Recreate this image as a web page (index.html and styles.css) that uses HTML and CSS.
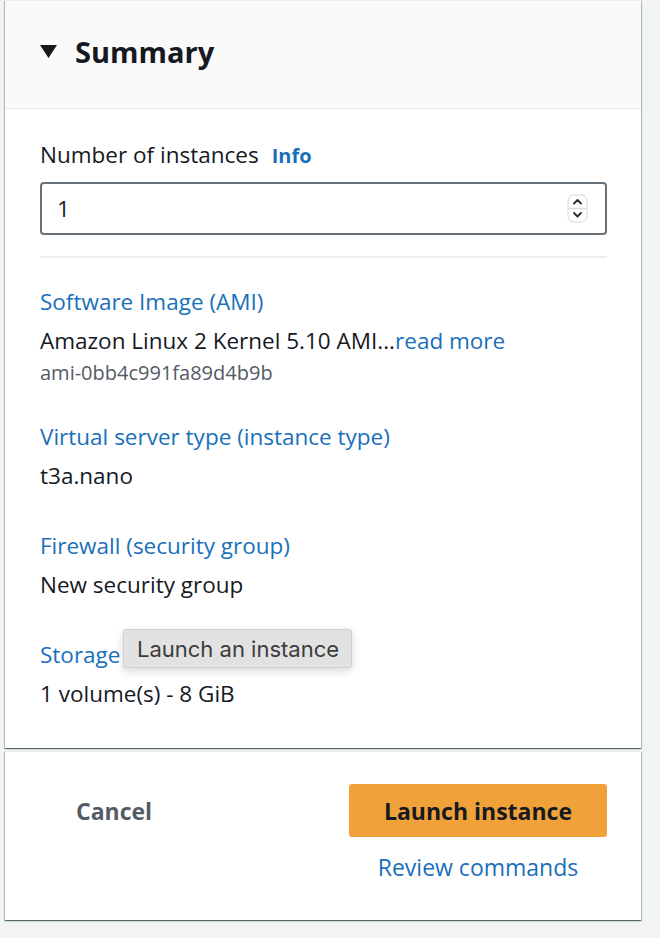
FILE: index.html
```html
<!DOCTYPE html>
<html lang="en">
<head>
<meta charset="utf-8">
<title>Summary</title>
<link rel="stylesheet" href="styles.css">
</head>
<body>
<div class="page">
  <section class="card summary">
    <header class="card-header">
      <svg class="caret" width="17" height="13" viewBox="0 0 17 13" aria-hidden="true"><polygon points="0,0 17,0 8.5,13" fill="#16191f"/></svg>
      <h2 class="title">Summary</h2>
    </header>
    <div class="card-body">
      <div class="field">
        <div class="field-label">Number of instances <a class="info" href="#">Info</a></div>
        <div class="number-input">
          <span class="number-value">1</span>
          <svg class="spinner" width="21" height="29" viewBox="0 0 21 29" aria-hidden="true">
            <rect x="1" y="1" width="19" height="27" rx="6" fill="#fff" stroke="#d6d6d6"/>
            <line x1="1.5" y1="14.5" x2="19.5" y2="14.5" stroke="#dcdcdc" stroke-width="1.5"/>
            <polyline points="7,9.5 10.5,6 14,9.5" fill="none" stroke="#2b2b2b" stroke-width="1.8" stroke-linecap="round" stroke-linejoin="round"/>
            <polyline points="7,19 10.5,22.5 14,19" fill="none" stroke="#2b2b2b" stroke-width="1.8" stroke-linecap="round" stroke-linejoin="round"/>
          </svg>
        </div>
      </div>
      <hr class="divider">
      <div class="details">
        <div class="group">
          <a class="key" href="#">Software Image (AMI)</a>
          <div class="value">Amazon Linux 2 Kernel 5.10 AMI...<a class="more" href="#">read more</a></div>
          <div class="sub">ami-0bb4c991fa89d4b9b</div>
        </div>
        <div class="group">
          <a class="key" href="#">Virtual server type (instance type)</a>
          <div class="value">t3a.nano</div>
        </div>
        <div class="group">
          <a class="key" href="#">Firewall (security group)</a>
          <div class="value">New security group</div>
        </div>
        <div class="group storage">
          <a class="key" href="#">Storage</a>
          <div class="value">1 volume(s) - 8 GiB</div>
          <div class="tooltip">Launch an instance</div>
        </div>
      </div>
    </div>
  </section>
  <section class="card actions">
    <div class="cancel-col">
      <button class="cancel" type="button">Cancel</button>
    </div>
    <div class="primary-col">
      <button class="launch" type="button">Launch instance</button>
      <a class="review" href="#">Review commands</a>
    </div>
  </section>
</div>
</body>
</html>
```
FILE: styles.css
```css
* { box-sizing: border-box; }
html, body { margin: 0; padding: 0; }
body {
  background: #f2f3f3;
  font-family: "Open Sans", "Noto Sans", sans-serif;
  color: #16191f;
  width: 660px;
  height: 938px;
  overflow: hidden;
}
a { text-decoration: none; color: #1a6fbb; }

.page {
  padding: 0 19px 0 5px;
}

.card {
  background: #fff;
  border-top: 1px solid #eaeded;
  box-shadow: 0 1px 1px 0 rgba(0, 28, 36, 0.45), 1px 1px 1px 0 rgba(0, 28, 36, 0.2), -1px 1px 1px 0 rgba(0, 28, 36, 0.2);
}

.summary { height: 748px; }

.card-header {
  height: 108px;
  background: #fafafa;
  border-bottom: 1px solid #eaeded;
  display: flex;
  align-items: center;
  padding: 0 0 6px 35px;
  gap: 18px;
}
.title {
  margin: 0;
  font-size: 29px;
  font-weight: 700;
  line-height: 36px;
  color: #16191f;
}

.card-body {
  position: relative;
  padding: 31px 34px 0 35px;
}

.field-label {
  font-size: 22.5px;
  line-height: 30px;
  display: flex;
  align-items: baseline;
  gap: 13px;
}
.info {
  font-size: 20px;
  font-weight: 700;
}

.number-input {
  margin-top: 11px;
  height: 53px;
  border: 2px solid #687078;
  border-radius: 4px;
  display: flex;
  align-items: center;
  justify-content: space-between;
  padding: 0 17px 0 15px;
  font-size: 22.5px;
}
.number-value { line-height: 30px; }

.divider {
  margin: 21px 0 0;
  border: 0;
  border-top: 2px solid #eaeded;
  height: 0;
}

.details { padding-top: 29px; }
.group { display: flex; flex-direction: column; align-items: flex-start; }
.group + .group { margin-top: 40px; }
.group:nth-child(2) { margin-top: 37px; }
.key {
  font-size: 22.5px;
  line-height: 30px;
}
.value {
  margin-top: 9px;
  font-size: 22.5px;
  line-height: 30px;
  color: #16191f;
}
.sub {
  margin-top: 5px;
  font-size: 20px;
  line-height: 24px;
  color: #545b64;
}

.storage { position: relative; }
.tooltip {
  position: absolute;
  left: 83px;
  top: -11px;
  height: 39px;
  padding: 0 12px 0 13px;
  display: flex;
  align-items: center;
  background: #e2e2e2;
  border: 1px solid #d0d0d0;
  border-radius: 3px;
  box-shadow: 0 3px 8px rgba(0, 0, 0, 0.16);
  font-family: "Inter", "Liberation Sans", sans-serif;
  font-size: 22px;
  color: #3c3c3c;
  white-space: nowrap;
}

.actions {
  margin-top: 3px;
  height: 169px;
  display: flex;
  padding: 32px 34px 0 35px;
}
.cancel-col { flex: 1; }
.cancel {
  height: 53px;
  padding: 0 36px;
  border: 0;
  background: none;
  font-family: inherit;
  font-size: 23px;
  font-weight: 700;
  color: #545b64;
  cursor: pointer;
}
.primary-col {
  width: 258px;
  display: flex;
  flex-direction: column;
  align-items: center;
}
.launch {
  width: 258px;
  height: 53px;
  border: 0;
  border-radius: 3px;
  background: #f0a13a;
  font-family: inherit;
  font-size: 23px;
  font-weight: 700;
  color: #16191f;
  cursor: pointer;
}
.review {
  margin-top: 15px;
  font-size: 23px;
  line-height: 30px;
}
```
